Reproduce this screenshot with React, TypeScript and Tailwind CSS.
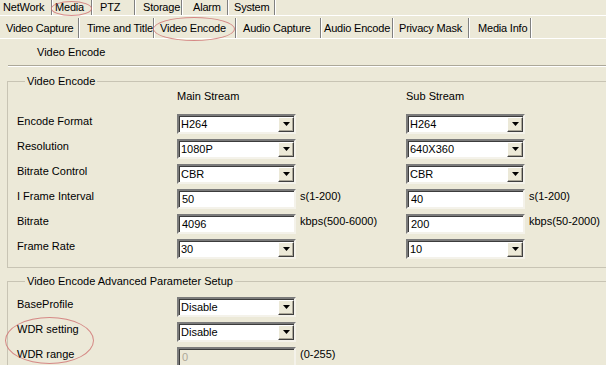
import { ReactNode } from "react";

const topTabs = [
  { label: "NetWork", className: "w-[52px] pl-[3px]" },
  { label: "Media", className: "w-[40px] pl-[3px]" },
  { label: "PTZ", className: "w-[43px] pl-[8px]" },
  { label: "Storage", className: "w-[47px] pl-[8px]" },
  { label: "Alarm", className: "w-[46px] pl-[11px]" },
  { label: "System", className: "w-[47px] pl-[6px]" },
];

const subTabs = [
  { label: "Video Capture", className: "w-[79px] pl-[6px]" },
  { label: "Time and Title", className: "w-[75px] pl-[8px]" },
  { label: "Video Encode", className: "w-[82px] pl-[6px]" },
  { label: "Audio Capture", className: "w-[85px] pl-[7px]" },
  { label: "Audio Encode", className: "w-[72px] pl-[3px]" },
  { label: "Privacy Mask", className: "w-[76px] pl-[6px]" },
  { label: "Media Info", className: "w-[62px] pl-[9px]" },
];

const sunken =
  "border-2 border-t-[#7b7b7b] border-l-[#7b7b7b] border-b-[#f4f2ea] border-r-[#f4f2ea] shadow-[inset_1px_1px_0_#3c3c3c]";

const Select = ({ value }: { value: string }) => (
  <div className={`flex h-[20px] w-[119px] items-stretch bg-white ${sunken}`}>
    <div className="flex flex-1 items-center pl-[2px] pt-[1px]">{value}</div>
    <div className="mt-[1px] flex w-[16px] items-center justify-center border border-t-white border-l-white border-b-[#404040] border-r-[#404040] bg-[#ece9d8] shadow-[inset_-1px_-1px_0_#aca899]">
      <svg width="7" height="4" viewBox="0 0 7 4">
        <path d="M0 0h7L3.5 4z" fill="#000" />
      </svg>
    </div>
  </div>
);

const Input = ({ value, disabled }: { value: string; disabled?: boolean }) => (
  <div
    className={`flex h-[20px] w-[119px] items-center pl-[3px] pt-[1px] ${sunken} ${
      disabled ? "bg-[#ece9d8] text-[#aca899]" : "bg-white"
    }`}
  >
    {value}
  </div>
);

const Row = ({
  label,
  main,
  mainUnit,
  sub,
  subUnit,
}: {
  label: string;
  main: ReactNode;
  mainUnit?: string;
  sub?: ReactNode;
  subUnit?: string;
}) => (
  <div className="flex h-[25px] items-center whitespace-nowrap">
    <div className="w-[160px] shrink-0 pb-[5px]">{label}</div>
    <div className="w-[119px] shrink-0">{main}</div>
    <div className="w-[110px] shrink-0 pb-[4px] pl-[4px]">{mainUnit}</div>
    <div className="w-[119px] shrink-0">{sub}</div>
    <div className="pb-[4px] pl-[4px]">{subUnit}</div>
  </div>
);

export default function App() {
  return (
    <div className="relative h-[365px] w-[606px] overflow-hidden bg-[#ece9d8] font-['Liberation_Sans',Arial,sans-serif] text-[11px] leading-[13px] text-black">
      {/* top tab row */}
      <div className="flex h-[15px] items-center whitespace-nowrap tracking-[-0.2px]">
        {topTabs.map((t) => (
          <div
            key={t.label}
            className={`flex h-full shrink-0 items-center border-r border-[#808080] shadow-[1px_0_0_#fff] ${t.className}`}
          >
            {t.label}
          </div>
        ))}
      </div>
      <div className="h-[1px] bg-white" />

      {/* sub tab row */}
      <div className="flex h-[22px] items-center whitespace-nowrap pt-[2px] tracking-[-0.2px]">
        {subTabs.map((t) => (
          <div
            key={t.label}
            className={`flex h-full shrink-0 items-center border-r border-[#808080] shadow-[1px_0_0_#fff] ${t.className}`}
          >
            {t.label}
          </div>
        ))}
      </div>
      <div className="h-[1px] bg-white" />

      <div className="flex h-[26px] items-center pl-[37px] pt-[1px]">Video Encode</div>
      <div className="ml-[8px] h-[1px] bg-[#aca899]" />
      <div className="ml-[8px] h-[1px] bg-white" />

      {/* main group */}
      <fieldset className="ml-[7px] mt-[8px] w-[640px] border border-[#c8c4b4] pb-[6px] pl-[9px]">
        <legend className="ml-[8px] px-[2px]">Video Encode</legend>
        <div className="mt-[2px] flex h-[21px] whitespace-nowrap">
          <div className="w-[160px]" />
          <div className="w-[229px]">Main Stream</div>
          <div>Sub Stream</div>
        </div>
        <Row label="Encode Format" main={<Select value="H264" />} sub={<Select value="H264" />} />
        <Row label="Resolution" main={<Select value="1080P" />} sub={<Select value="640X360" />} />
        <Row label="Bitrate Control" main={<Select value="CBR" />} sub={<Select value="CBR" />} />
        <Row
          label="I Frame Interval"
          main={<Input value="50" />}
          mainUnit="s(1-200)"
          sub={<Input value="40" />}
          subUnit="s(1-200)"
        />
        <Row
          label="Bitrate"
          main={<Input value="4096" />}
          mainUnit="kbps(500-6000)"
          sub={<Input value="200" />}
          subUnit="kbps(50-2000)"
        />
        <Row label="Frame Rate" main={<Select value="30" />} sub={<Select value="10" />} />
      </fieldset>

      {/* advanced group */}
      <fieldset className="ml-[7px] mt-[7px] w-[640px] border border-[#c8c4b4] pl-[9px] pt-[6px]">
        <legend className="ml-[8px] px-[2px]">Video Encode Advanced Parameter Setup</legend>
        <Row label="BaseProfile" main={<Select value="Disable" />} />
        <Row label="WDR setting" main={<Select value="Disable" />} />
        <Row label="WDR range" main={<Input value="0" disabled />} mainUnit="(0-255)" />
      </fieldset>

      {/* red annotation ellipses */}
      <div className="absolute left-[51px] top-[1px] h-[15px] w-[41px] rounded-[50%] border-[1.5px] border-[#d07070]/80" />
      <div className="absolute left-[153px] top-[17px] h-[24px] w-[82px] rounded-[50%] border-[1.5px] border-[#d07070]/80" />
      <div className="absolute left-[5px] top-[317px] h-[47px] w-[89px] rounded-[50%] border-[1.5px] border-[#d07070]/80" />
    </div>
  );
}
